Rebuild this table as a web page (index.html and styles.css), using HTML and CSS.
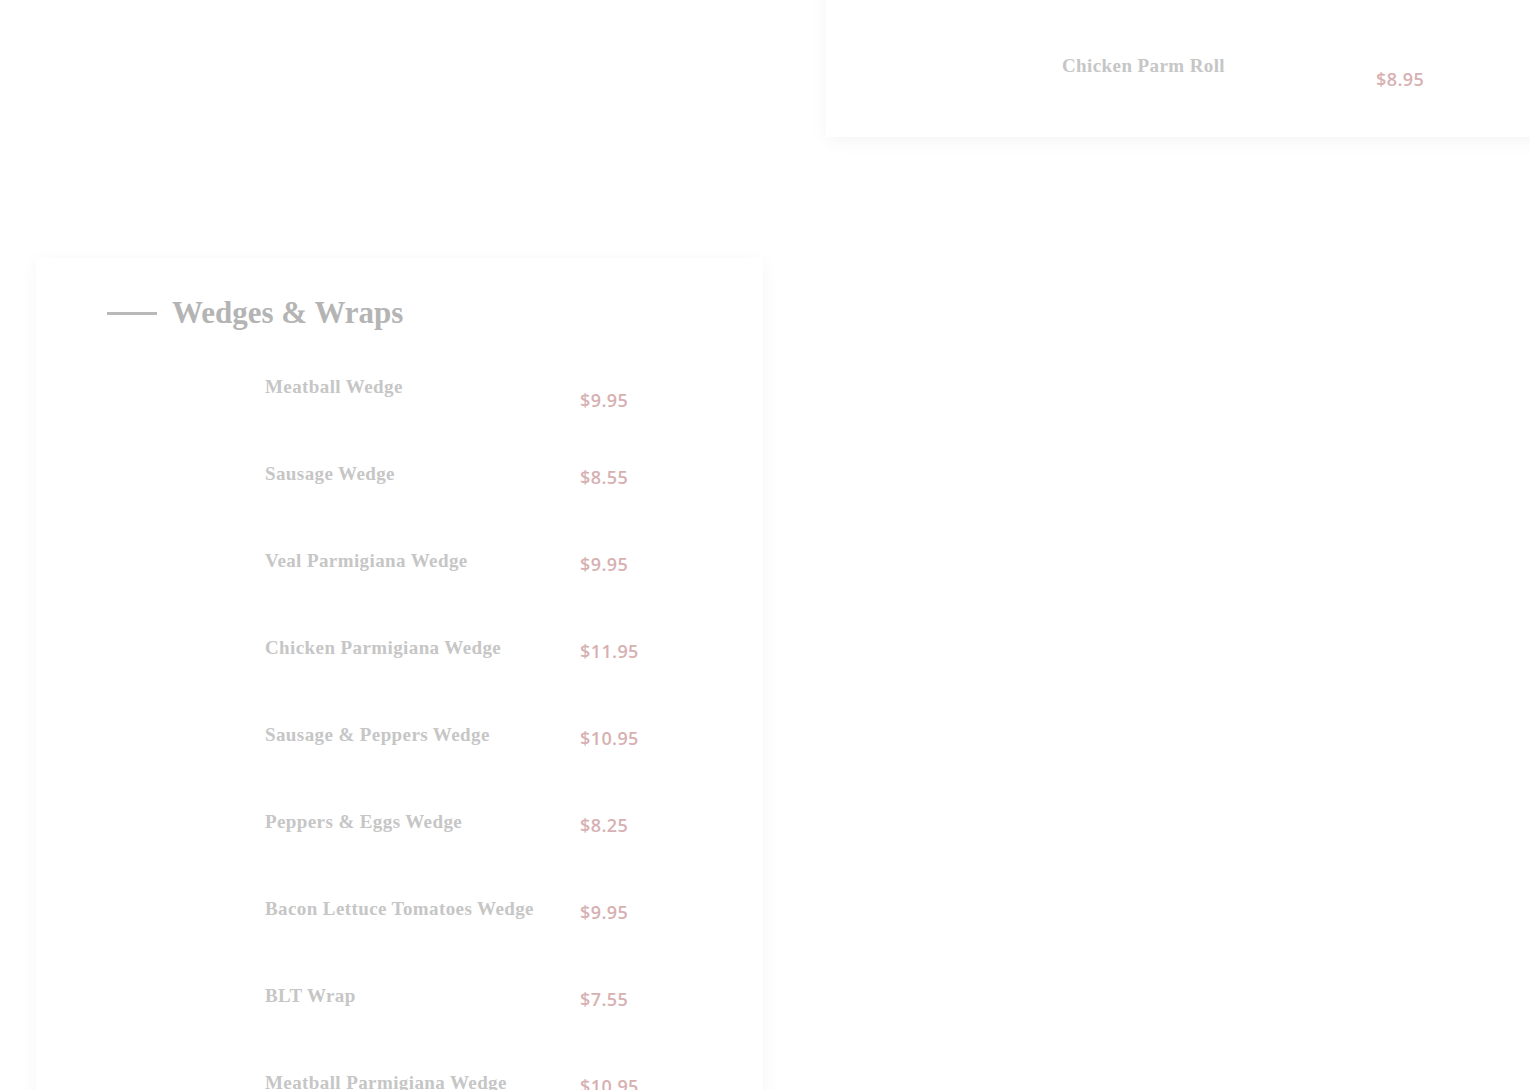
FILE: index.html
```html
<!DOCTYPE html>
<html lang="en">
<head>
    <meta charset="UTF-8">
    <meta name="viewport" content="width=device-width, initial-scale=1.0">
    <title>Menu</title>
    <link rel="stylesheet" href="styles.css">
</head>
<body>
    <div class="menu">
        <div class="card card-top">
            <ul class="items">
                <li class="item">
                    <span class="item-name">Chicken Parm Roll</span>
                    <span class="item-price">$8.95</span>
                </li>
            </ul>
        </div>

        <div class="card card-main">
            <div class="section-title">
                <span class="rule"></span>
                <h2>Wedges &amp; Wraps</h2>
            </div>
            <ul class="items">
                <li class="item"><span class="item-name">Meatball Wedge</span><span class="item-price">$9.95</span></li>
                <li class="item"><span class="item-name">Sausage Wedge</span><span class="item-price">$8.55</span></li>
                <li class="item"><span class="item-name">Veal Parmigiana Wedge</span><span class="item-price">$9.95</span></li>
                <li class="item"><span class="item-name">Chicken Parmigiana Wedge</span><span class="item-price">$11.95</span></li>
                <li class="item"><span class="item-name">Sausage &amp; Peppers Wedge</span><span class="item-price">$10.95</span></li>
                <li class="item"><span class="item-name">Peppers &amp; Eggs Wedge</span><span class="item-price">$8.25</span></li>
                <li class="item"><span class="item-name">Bacon Lettuce Tomatoes Wedge</span><span class="item-price">$9.95</span></li>
                <li class="item"><span class="item-name">BLT Wrap</span><span class="item-price">$7.55</span></li>
                <li class="item"><span class="item-name">Meatball Parmigiana Wedge</span><span class="item-price">$10.95</span></li>
            </ul>
        </div>
    </div>
</body>
</html>
```

FILE: styles.css
```css
html, body {
    margin: 0;
    padding: 0;
    background-color: #fff;
    overflow: hidden;
}
body {
    font-family: "Liberation Serif", serif;
}
.menu {
    display: grid;
    grid-template-columns: 727px 734px;
    column-gap: 63px;
    row-gap: 121px;
    padding-left: 36px;
}
.card {
    background-color: #fff;
    box-shadow: 0 4px 18px rgba(0,0,0,0.045);
}
.card-top {
    grid-column: 2;
    grid-row: 1;
    margin-top: -40px;
    padding: 94px 0 46px 236px;
}
.card-main {
    grid-column: 1;
    grid-row: 2;
    padding: 37px 0 40px 71px;
    height: 900px;
}
.section-title {
    display: flex;
    align-items: center;
    gap: 15px;
}
.rule {
    width: 50px;
    height: 3px;
    background-color: #b9b9b9;
}
h2 {
    margin: 0;
    font-size: 31px;
    line-height: 36px;
    font-weight: bold;
    color: #b4b4b4;
}
.items {
    list-style: none;
    margin: 0;
    padding: 0;
}
.card-main .items {
    margin-top: 44px;
    padding-left: 158px;
}
.item {
    display: flex;
    align-items: flex-start;
    height: 87px;
}
.item-name {
    width: 315px;
    font-size: 19px;
    line-height: 24px;
    letter-spacing: 0.4px;
    font-weight: bold;
    color: #c6c6c6;
}
.item-price {
    font-family: "Open Sans", sans-serif;
    font-size: 18px;
    line-height: 24px;
    letter-spacing: 0.4px;
    font-weight: 600;
    color: #d7b0b2;
    margin-top: 3px;
}
.item:first-child .item-price {
    margin-top: 13px;
}
.card-top .item {
    height: auto;
}
.card-top .item-name {
    width: 314px;
}
```
